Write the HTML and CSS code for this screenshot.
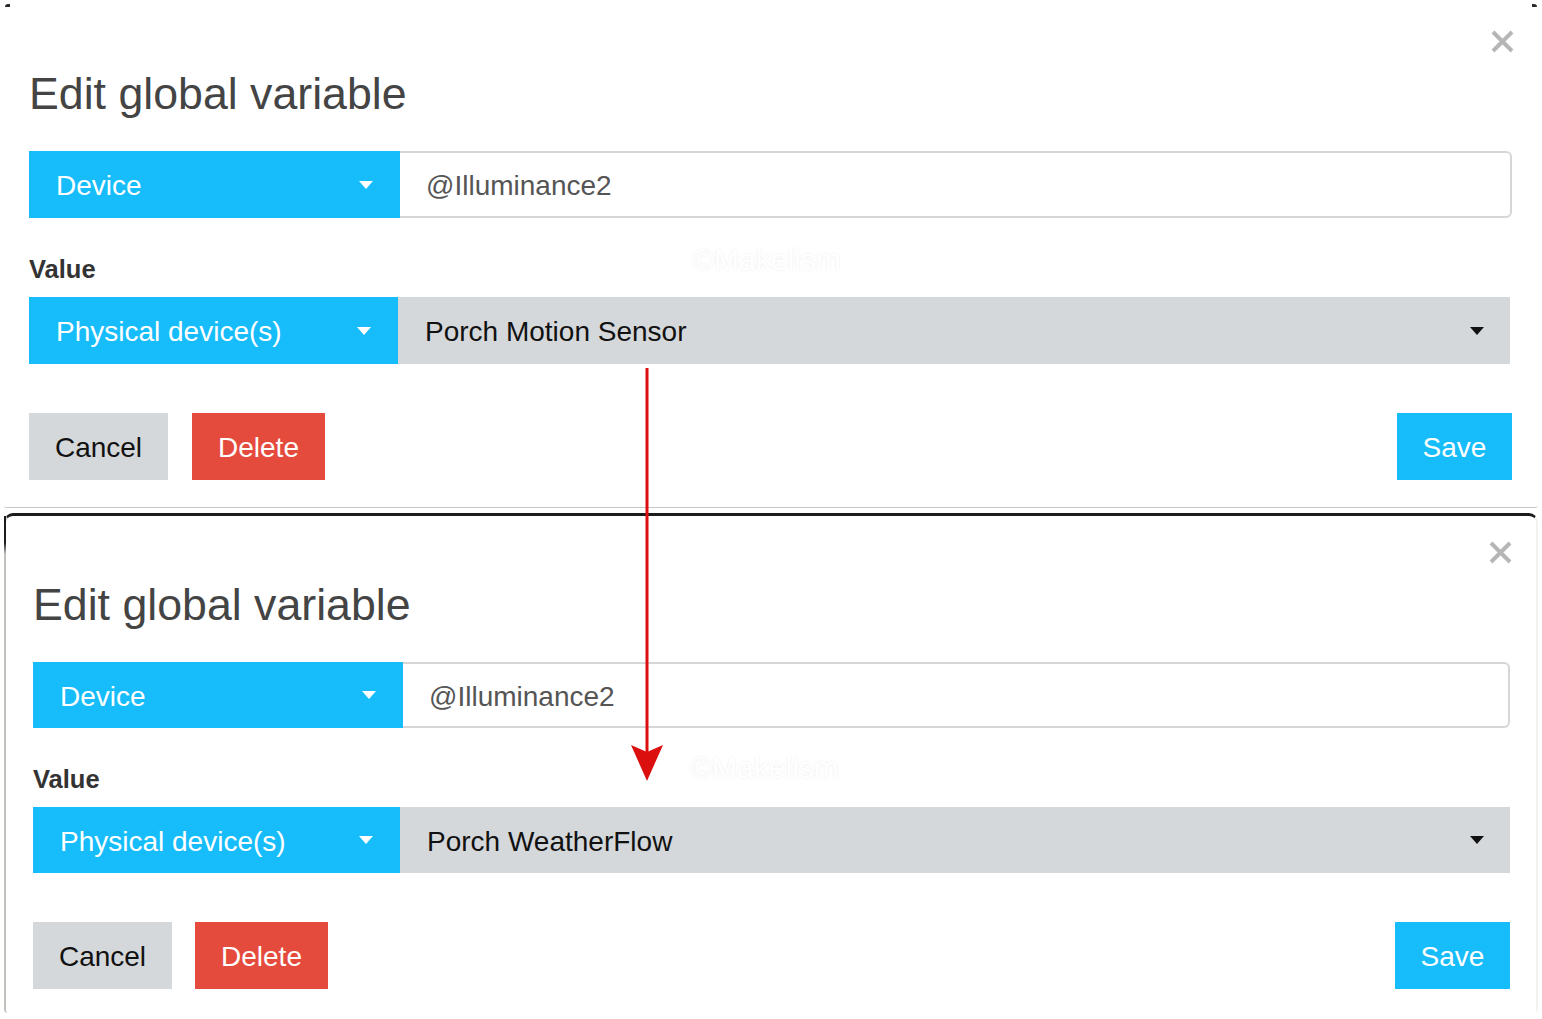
FILE: index.html
```html
<!DOCTYPE html>
<html lang="en">
<head>
<meta charset="utf-8">
<title>Edit global variable</title>
<link rel="stylesheet" href="styles.css">
</head>
<body>
<div class="page">
  <section class="panel panel-top">
    <div class="panel-head">
      <button class="close" aria-label="Close">
        <svg viewBox="0 0 25 25" width="25" height="25"><path d="M3 3 L22 22 M22 3 L3 22" stroke="#b6b6b6" stroke-width="4" stroke-linecap="butt"/></svg>
      </button>
    </div>
    <h1 class="title">Edit global variable</h1>
    <div class="row">
      <div class="pick pick-a">Device<span class="caret caret-white"></span></div>
      <div class="field">@Illuminance2</div>
    </div>
    <div class="label">Value</div>
    <div class="row">
      <div class="pick pick-b">Physical device(s)<span class="caret caret-white"></span></div>
      <div class="select">Porch Motion Sensor<span class="caret caret-black"></span></div>
    </div>
    <div class="actions">
      <button class="btn btn-cancel">Cancel</button>
      <button class="btn btn-delete">Delete</button>
      <span class="spacer"></span>
      <button class="btn btn-save">Save</button>
    </div>
    <span class="watermark">©Makelism</span>
  </section>
  <section class="panel panel-bottom">
    <div class="panel-head">
      <button class="close" aria-label="Close">
        <svg viewBox="0 0 25 25" width="25" height="25"><path d="M3 3 L22 22 M22 3 L3 22" stroke="#b6b6b6" stroke-width="4" stroke-linecap="butt"/></svg>
      </button>
    </div>
    <h1 class="title">Edit global variable</h1>
    <div class="row">
      <div class="pick pick-a">Device<span class="caret caret-white"></span></div>
      <div class="field">@Illuminance2</div>
    </div>
    <div class="label">Value</div>
    <div class="row">
      <div class="pick pick-b">Physical device(s)<span class="caret caret-white"></span></div>
      <div class="select">Porch WeatherFlow<span class="caret caret-black"></span></div>
    </div>
    <div class="actions">
      <button class="btn btn-cancel">Cancel</button>
      <button class="btn btn-delete">Delete</button>
      <span class="spacer"></span>
      <button class="btn btn-save">Save</button>
    </div>
    <span class="watermark">©Makelism</span>
  </section>
  <svg class="arrow" viewBox="0 0 40 420" width="40" height="420">
    <rect x="18.5" y="0" width="3" height="385" fill="#dc0f0f"/>
    <path d="M4 377 L20 384 L36 377 L20 413 Z" fill="#dc0f0f"/>
  </svg>
</div>
</body>
</html>
```

FILE: styles.css
```css
* { box-sizing: border-box; }

html, body {
  margin: 0;
  padding: 0;
  background: #ffffff;
  overflow: hidden;
}

body {
  font-family: "Liberation Sans", Arial, Helvetica, sans-serif;
  width: 1542px;
  height: 1019px;
}

.page {
  position: relative;
  padding: 0 4px;
}

.panel {
  position: relative;
  display: flex;
  flex-direction: column;
}

.panel-top {
  padding: 29px 26px 26px 25px;
  border-bottom: 1px solid #c6c6c2;
  border-bottom-left-radius: 3px;
  border-bottom-right-radius: 3px;
  height: 508px;
}

.panel-top::before,
.panel-top::after {
  content: "";
  position: absolute;
  top: 4px;
  width: 5px;
  height: 3px;
  background: #2a2a2a;
}
.panel-top::before { left: 1px; border-top-left-radius: 3px; }
.panel-top::after { right: 1px; border-top-right-radius: 3px; }

.panel-bottom {
  margin-top: 5px;
  padding: 24px 26px 24px 27px;
  border-top: 3px solid #1c1c1c;
  border-left: 2px solid #c2c2bd;
  border-right: 2px solid #f2f2f2;
  border-radius: 9px 9px 4px 4px;
  height: 500px;
}

.panel-bottom::before {
  content: "";
  position: absolute;
  left: -2px;
  top: 0;
  width: 2px;
  height: 38px;
  background: linear-gradient(#1c1c1c 0%, #1c1c1c 70%, #c2c2bd 100%);
}

.panel-head {
  display: flex;
  justify-content: flex-end;
  height: 24px;
}

.close {
  margin: 0 -3px 0 0;
  padding: 0;
  border: 0;
  background: none;
  width: 25px;
  height: 25px;
  display: block;
}
.close svg { display: block; }

.title {
  margin: 15px 0 0;
  font-size: 44.7px;
  line-height: 51px;
  font-weight: normal;
  color: #444444;
  letter-spacing: 0;
}

.row {
  display: flex;
  height: 67px;
  margin-top: 32px;
}
.label + .row { margin-top: 14px; }

.pick {
  display: flex;
  align-items: center;
  padding-left: 27px;
  padding-top: 3px;
  background: #17bdfa;
  color: #ffffff;
  font-size: 28px;
  position: relative;
  flex: none;
}
.pick-a { width: 371px; }
.pick-b { width: 369px; }
.panel-bottom .pick-b { width: 367px; }
.panel-bottom .pick-a { width: 370px; }

.caret {
  position: absolute;
  top: 50%;
  margin-top: -4px;
  width: 0;
  height: 0;
  border-left: 7px solid transparent;
  border-right: 7px solid transparent;
}
.caret-white { border-top: 8px solid #ffffff; right: 27px; }
.caret-black { border-top: 8px solid #111111; right: 26px; }

.field {
  flex: 1;
  display: flex;
  align-items: center;
  padding-left: 26px;
  padding-top: 3px;
  border: 2px solid #d6d6d6;
  border-left: 0;
  border-radius: 0 6px 6px 0;
  color: #555555;
  font-size: 28px;
  background: #ffffff;
}

.select {
  flex: 1;
  display: flex;
  align-items: center;
  padding-left: 27px;
  padding-top: 3px;
  background: #d5d8da;
  color: #111111;
  font-size: 28px;
  position: relative;
}
.panel-top .select { margin-right: 2px; }

.label {
  margin-top: 37px;
  font-size: 25.5px;
  line-height: 28px;
  font-weight: bold;
  color: #333333;
}

.actions {
  display: flex;
  margin-top: 49px;
  height: 67px;
}

.btn {
  border: 0;
  margin: 0;
  padding: 3px 0 0;
  height: 67px;
  font-family: inherit;
  font-size: 28px;
  cursor: pointer;
}
.btn-cancel { background: #d5d8da; color: #111111; width: 139px; }
.btn-delete { background: #e54b3d; color: #ffffff; margin-left: 24px; width: 133px; }
.panel-bottom .btn-delete { margin-left: 23px; }
.btn-save { background: #17bdfa; color: #ffffff; width: 115px; }
.spacer { flex: 1; }

.watermark {
  position: absolute;
  left: 688px;
  top: 243px;
  font-size: 30px;
  color: #ffffff;
  text-shadow: 0 0 3px rgba(0, 0, 0, 0.08);
  pointer-events: none;
}
.panel-bottom .watermark { left: 684px; top: 235px; }

.arrow {
  position: absolute;
  left: 627px;
  top: 368px;
}
```
